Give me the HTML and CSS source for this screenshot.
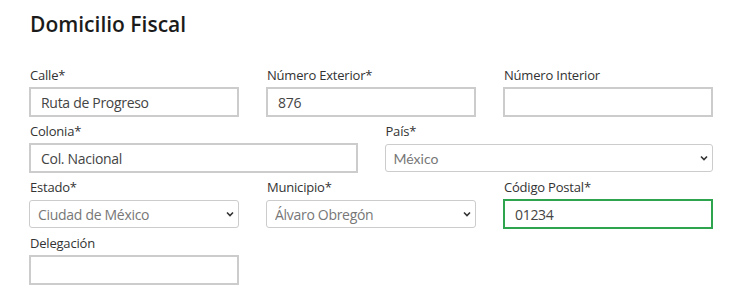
FILE: index.html
```html
<!DOCTYPE html>
<html lang="es">
<head>
  <meta charset="UTF-8" />
  <meta name="viewport" content="width=device-width, initial-scale=1.0" />
  <title>Domicilio Fiscal</title>
  <link rel="stylesheet" href="styles.css">
</head>
<body>
  <h1>Domicilio Fiscal</h1>
  <form class="form-grid">
    <div class="field span-2">
      <label for="calle">Calle*</label>
      <input type="text" id="calle" value="Ruta de Progreso" />
    </div>
    <div class="field span-2">
      <label for="numExt">Número Exterior*</label>
      <input type="text" id="numExt" value="876" />
    </div>
    <div class="field span-2">
      <label for="numInt">Número Interior</label>
      <input type="text" id="numInt" value="" />
    </div>

    <div class="field span-3">
      <label for="colonia">Colonia*</label>
      <input type="text" id="colonia" value="Col. Nacional" />
    </div>
    <div class="field span-3">
      <label for="pais">País*</label>
      <div class="select-wrap">
        <select id="pais" class="lato">
          <option>México</option>
        </select>
        <svg class="chevron" width="8" height="6" viewBox="0 0 8 6"><path d="M1 1.5 L4 4.5 L7 1.5" fill="none" stroke="#333" stroke-width="1.6"/></svg>
      </div>
    </div>

    <div class="field span-2">
      <label for="estado">Estado*</label>
      <div class="select-wrap">
        <select id="estado">
          <option>Ciudad de México</option>
        </select>
        <svg class="chevron" width="8" height="6" viewBox="0 0 8 6"><path d="M1 1.5 L4 4.5 L7 1.5" fill="none" stroke="#333" stroke-width="1.6"/></svg>
      </div>
    </div>
    <div class="field span-2">
      <label for="municipio">Municipio*</label>
      <div class="select-wrap">
        <select id="municipio">
          <option>Álvaro Obregón</option>
        </select>
        <svg class="chevron" width="8" height="6" viewBox="0 0 8 6"><path d="M1 1.5 L4 4.5 L7 1.5" fill="none" stroke="#333" stroke-width="1.6"/></svg>
      </div>
    </div>
    <div class="field span-2">
      <label for="cp">Código Postal*</label>
      <input type="text" id="cp" class="valid" value="01234" />
    </div>

    <div class="field span-2">
      <label for="delegacion">Delegación</label>
      <input type="text" id="delegacion" value="" />
    </div>
  </form>
</body>
</html>
```

FILE: styles.css
```css
* {
  box-sizing: border-box;
}

body {
  margin: 0;
  padding: 11px 34px 0 29px;
  background: #fff;
  color: #222;
  font-family: "Open Sans", "Noto Sans", sans-serif;
}

h1 {
  margin: 0 0 28px 1px;
  font-size: 21px;
  font-weight: 600;
  line-height: 26px;
  color: #1b1b1b;
}

.form-grid {
  display: grid;
  grid-template-columns: repeat(6, 1fr);
  column-gap: 27px;
  row-gap: 4px;
}

.span-2 {
  grid-column: span 2;
}

.span-3 {
  grid-column: span 3;
}

.field {
  display: flex;
  flex-direction: column;
}

label {
  font-size: 13px;
  line-height: 20px;
  color: #333;
  margin: 0 0 2px 1px;
  letter-spacing: -0.2px;
}

input[type="text"] {
  height: 30px;
  width: 100%;
  padding: 0 10px;
  font-family: inherit;
  font-size: 14px;
  color: #444;
  background: #fff;
  border: 2px solid #ccc;
  border-radius: 0;
  outline: none;
  letter-spacing: -0.3px;
}

input.valid {
  border-color: #2ea44f;
}

.select-wrap {
  position: relative;
  padding: 1px 0;
}

select {
  appearance: none;
  -webkit-appearance: none;
  width: 100%;
  height: 28px;
  padding: 0 24px 0 8px;
  font-family: inherit;
  font-size: 14px;
  color: #777;
  background: #fff;
  border: 1px solid #ccc;
  border-radius: 3px;
  letter-spacing: -0.3px;
}

select.lato {
  font-family: Lato, sans-serif;
  font-size: 14px;
  letter-spacing: 0;
}

.chevron {
  position: absolute;
  right: 5px;
  top: 12px;
  pointer-events: none;
}
```
